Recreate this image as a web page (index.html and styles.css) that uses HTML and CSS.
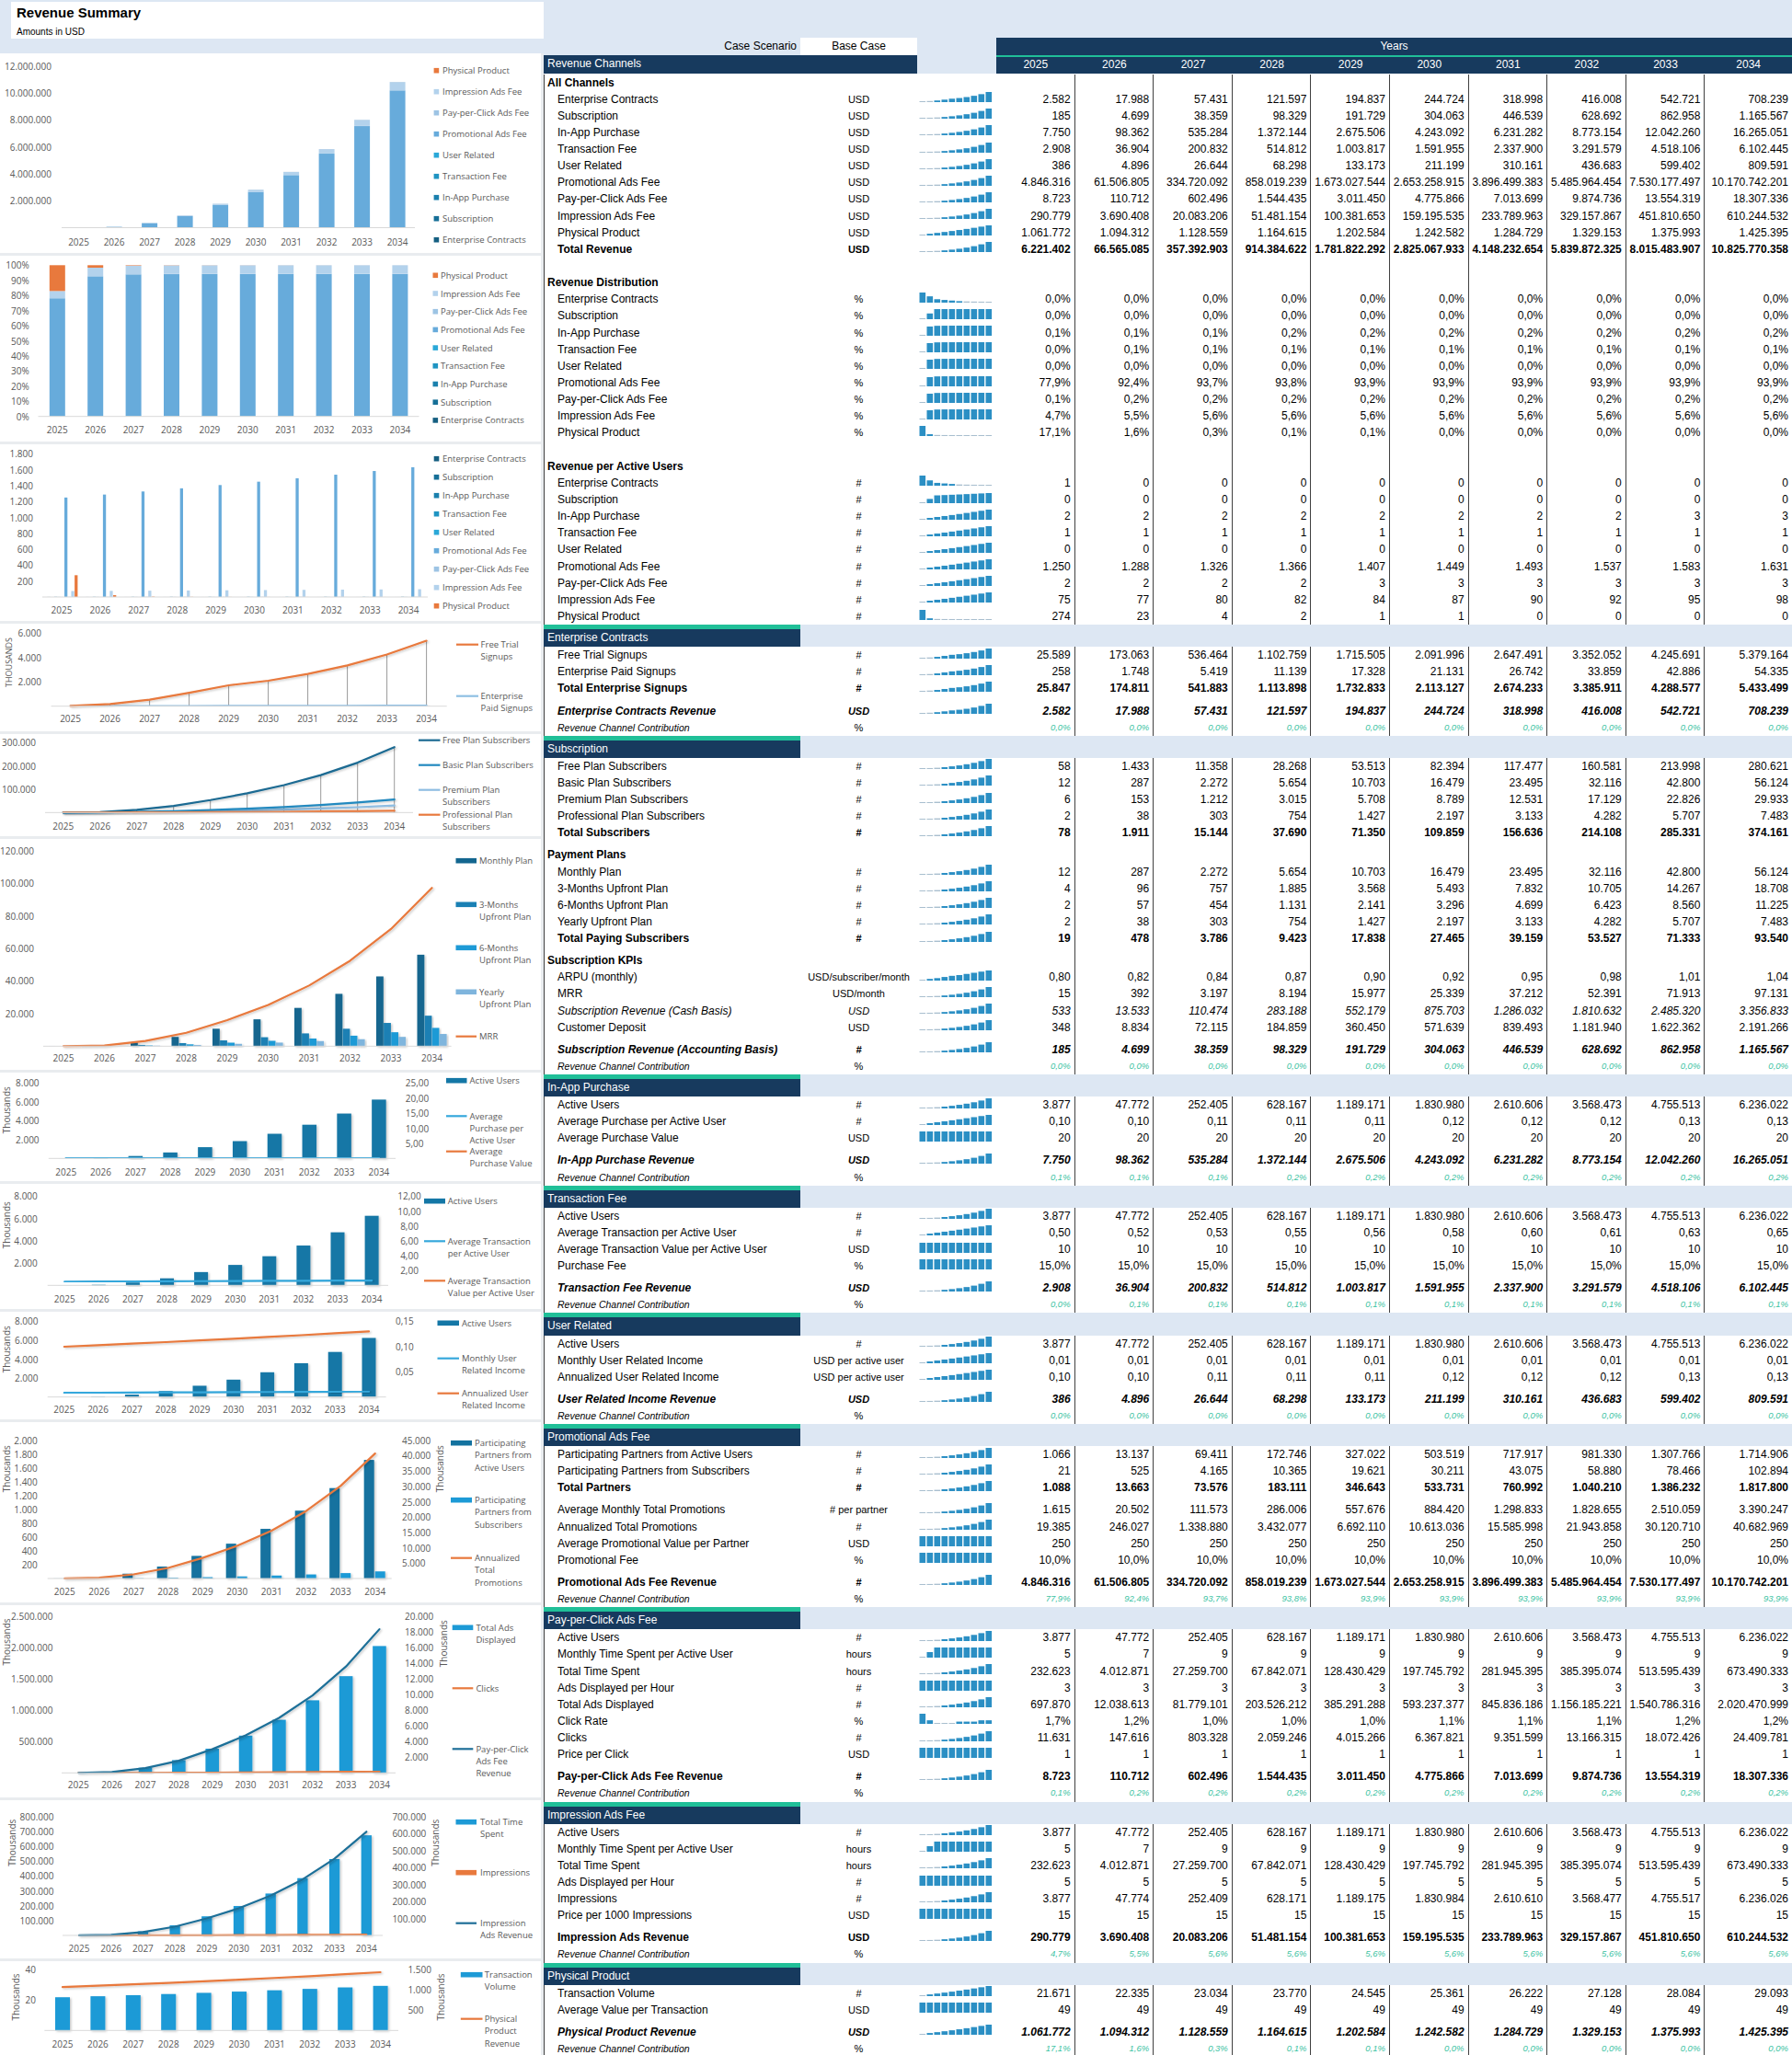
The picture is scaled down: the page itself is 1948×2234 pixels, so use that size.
FILE: index.html
```html
<!DOCTYPE html>
<html lang="en">
<head>
<meta charset="utf-8">
<title>Revenue Summary</title>
<link rel="stylesheet" href="styles.css">
</head>
<body>
<div class="page">
  <aside class="left">
    <div class="titlebar">
      <div class="titlebox">
        <div class="title">Revenue Summary</div>
        <div class="subtitle">Amounts in USD</div>
      </div>
    </div>
    <div class="charts" id="charts"></div>
  </aside>
  <main class="right">
    <div class="hdr-top"></div>
    <div class="grid hdr1">
      <div class="case">Case Scenario</div>
      <div class="base">Base Case</div>
      <div class="lb"></div>
      <div class="yrs-title">Years</div>
    </div>
    <div class="grid hdr2">
      <div class="rc">Revenue Channels</div>
      <div class="lb"></div>
      <div class="yr">2025</div>
      <div class="yr">2026</div>
      <div class="yr">2027</div>
      <div class="yr">2028</div>
      <div class="yr">2029</div>
      <div class="yr">2030</div>
      <div class="yr">2031</div>
      <div class="yr">2032</div>
      <div class="yr">2033</div>
      <div class="yr">2034</div>
    </div>
    <div class="rows" id="rows"></div>
  </main>
</div>
<script src="script.js"></script>
</body>
</html>
```

FILE: styles.css
```css
* { box-sizing: border-box; margin: 0; padding: 0; }
html, body { width: 1948px; height: 2234px; overflow: hidden; background: #fff; }
body { font-family: "Liberation Sans", Arial, sans-serif; font-size: 12px; color: #000; }

.page { display: flex; width: 1948px; height: 2234px; }

.left { width: 591px; flex: none; display: flex; flex-direction: column; }
.titlebar { height: 58px; background: #dde7f3; padding: 2px 0 0 12px; flex: none; }
.titlebox { height: 40px; background: #fff; padding: 3px 0 0 6px; }
.title { font-size: 15px; font-weight: bold; line-height: 18px; }
.subtitle { font-size: 10px; line-height: 12px; margin-top: 6px; }

.charts { flex: 1; display: flex; flex-direction: column; gap: 3px; background: #e9ecef; padding-right: 3px; }
.card { background: #fff; flex: none; }
.card svg { display: block; }

.ax, .lg, .rt9 { font-family: "Open Sans", "Liberation Sans", sans-serif; fill: #595959; }
.ax { font-size: 10px; }
.lg { font-size: 9.5px; }
.rt9 { font-size: 9px; }

.right { flex: 1; min-width: 0; }
.hdr-top { height: 41px; background: #dde7f3; }

.grid, .row { display: grid; grid-template-columns: 279px 127px 86px repeat(9, 85.6px) 1fr; }

.hdr1 { height: 19px; line-height: 19px; }
.case { background: #dde7f3; text-align: right; padding-right: 4px; }
.base { background: #fff; text-align: center; }
.lb { background: #dde7f3; }
.yrs-title { grid-column: 4 / -1; background: #173a5e; color: #fff; text-align: center; }

.hdr2 { height: 19.5px; }
.rc { grid-column: 1 / 3; background: #173a5e; color: #fff; padding-left: 4px; line-height: 19.5px; }
.yr { background: #173a5e; color: #fff; text-align: center; border-top: 2.7px solid #20bf98; line-height: 16.8px; }

.rows { padding-top: 1px; }
.row { height: 18.15px; line-height: 18.15px; box-shadow: inset 1px 0 0 #404040; }
.row > div { white-space: nowrap; }
.v { border-right: 1px solid #404040; }
.n { text-align: right; padding-right: 4px; }
.lab { padding-left: 15px; }
.grp .lab { padding-left: 4px; font-weight: bold; }
.u { text-align: center; font-size: 11px; }
.s { padding-left: 2px; }
.s svg { display: block; margin-top: 1.5px; }
.sp { height: 5.9px; }

.total .lab, .total .u, .total .n,
.rev .lab, .rev .u, .rev .n { font-weight: bold; }
.it .lab, .it .u, .it .n { font-style: italic; }

.contrib .lab { font-style: italic; font-size: 10.5px; }
.contrib .n { font-style: italic; font-size: 9.5px; color: #3cc3a3; }

.sec { height: 24.05px; background: #dde7f3; display: grid; grid-template-columns: 279px 1fr; }
.sec .lab { background: #173a5e; border-top: 5.9px solid #20bf98; color: #fff; padding-left: 4px; line-height: 18.15px; }
```

FILE: script.js
```js
(function () {
  'use strict';
  function f(n) { return String(Math.round(n)).replace(/\B(?=(\d{3})+(?!\d))/g, '.'); }
  function S(s) { return s.split(' '); }
  function rep(s) { var a = []; for (var i = 0; i < 10; i++) a.push(s); return a; }
  function parse(s) { return parseFloat(s.replace('%', '').replace(/\./g, '').replace(',', '.')); }
  function map10(fn) { var a = []; for (var i = 0; i < 10; i++) a.push(fn(i)); return a; }

  var KEYS = ['EC', 'Sub', 'IAP', 'TF', 'UR', 'Promo', 'PPC', 'Imp', 'Phys'];
  var NAME = { EC: 'Enterprise Contracts', Sub: 'Subscription', IAP: 'In-App Purchase', TF: 'Transaction Fee', UR: 'User Related', Promo: 'Promotional Ads Fee', PPC: 'Pay-per-Click Ads Fee', Imp: 'Impression Ads Fee', Phys: 'Physical Product' };
  var C = {
    EC: [2582, 17988, 57431, 121597, 194837, 244724, 318998, 416008, 542721, 708239],
    Sub: [185, 4699, 38359, 98329, 191729, 304063, 446539, 628692, 862958, 1165567],
    IAP: [7750, 98362, 535284, 1372144, 2675506, 4243092, 6231282, 8773154, 12042260, 16265051],
    TF: [2908, 36904, 200832, 514812, 1003817, 1591955, 2337900, 3291579, 4518106, 6102445],
    UR: [386, 4896, 26644, 68298, 133173, 211199, 310161, 436683, 599402, 809591],
    Promo: [4846316, 61506805, 334720092, 858019239, 1673027544, 2653258915, 3896499383, 5485964454, 7530177497, 10170742201],
    PPC: [8723, 110712, 602496, 1544435, 3011450, 4775866, 7013699, 9874736, 13554319, 18307336],
    Imp: [290779, 3690408, 20083206, 51481154, 100381653, 159195535, 233789963, 329157867, 451810650, 610244532],
    Phys: [1061772, 1094312, 1128559, 1164615, 1202584, 1242582, 1284729, 1329153, 1375993, 1425395]
  };
  var TOT = [6221402, 66565085, 357392903, 914384622, 1781822292, 2825067933, 4148232654, 5839872325, 8015483907, 10825770358];
  var AU = [3877, 47772, 252405, 628167, 1189171, 1830980, 2610606, 3568473, 4755513, 6236022];
  var FT = [25589, 173063, 536464, 1102759, 1715505, 2091996, 2647491, 3352052, 4245691, 5379164];
  var EPS = [258, 1748, 5419, 11139, 17328, 21131, 26742, 33859, 42886, 54335];
  var FP = [58, 1433, 11358, 28268, 53513, 82394, 117477, 160581, 213998, 280621];
  var BP = [12, 287, 2272, 5654, 10703, 16479, 23495, 32116, 42800, 56124];
  var PP = [6, 153, 1212, 3015, 5708, 8789, 12531, 17129, 22826, 29933];
  var PRO = [2, 38, 303, 754, 1427, 2197, 3133, 4282, 5707, 7483];
  var Q3 = [4, 96, 757, 1885, 3568, 5493, 7832, 10705, 14267, 18708];
  var H6 = [2, 57, 454, 1131, 2141, 3296, 4699, 6423, 8560, 11225];
  var MRR = [15, 392, 3197, 8194, 15977, 25339, 37212, 52391, 71913, 97131];
  var PAU = [1066, 13137, 69411, 172746, 327022, 503519, 717917, 981330, 1307766, 1714906];
  var PS = [21, 525, 4165, 10365, 19621, 30211, 43075, 58880, 78466, 102894];
  var ATP = [19385, 246027, 1338880, 3432077, 6692110, 10613036, 15585998, 21943858, 30120710, 40682969];
  var TTS = [232623, 4012871, 27259700, 67842071, 128430429, 197745792, 281945395, 385395074, 513595439, 673490333];
  var TAD = [697870, 12038613, 81779101, 203526212, 385291288, 593237377, 845836186, 1156185221, 1540786316, 2020470999];
  var CLK = [11631, 147616, 803328, 2059246, 4015266, 6367821, 9351599, 13166315, 18072426, 24409781];
  var IMPS = [3877, 47774, 252409, 628171, 1189175, 1830984, 2610610, 3568477, 4755517, 6236026];
  var TV = [21671, 22335, 23034, 23770, 24545, 25361, 26222, 27128, 28084, 29093];

  var APU = map10(function (i) { return C.IAP[i] / AU[i] / 20; });
  var ATU = map10(function (i) { return C.TF[i] / AU[i] / 1.5; });
  var URA = map10(function (i) { return C.UR[i] / AU[i]; });
  var URM = map10(function (i) { return C.UR[i] / AU[i] / 12; });

  var Z = '0,0% 0,0% 0,0% 0,0% 0,0% 0,0% 0,0% 0,0% 0,0% 0,0%';
  var RD = {
    EC: Z, Sub: Z,
    IAP: '0,1% 0,1% 0,1% 0,2% 0,2% 0,2% 0,2% 0,2% 0,2% 0,2%',
    TF: '0,0% 0,1% 0,1% 0,1% 0,1% 0,1% 0,1% 0,1% 0,1% 0,1%',
    UR: Z,
    Promo: '77,9% 92,4% 93,7% 93,8% 93,9% 93,9% 93,9% 93,9% 93,9% 93,9%',
    PPC: '0,1% 0,2% 0,2% 0,2% 0,2% 0,2% 0,2% 0,2% 0,2% 0,2%',
    Imp: '4,7% 5,5% 5,6% 5,6% 5,6% 5,6% 5,6% 5,6% 5,6% 5,6%',
    Phys: '17,1% 1,6% 0,3% 0,1% 0,1% 0,0% 0,0% 0,0% 0,0% 0,0%'
  };
  var RPA = {
    EC: '1 0 0 0 0 0 0 0 0 0', Sub: '0 0 0 0 0 0 0 0 0 0', IAP: '2 2 2 2 2 2 2 2 3 3',
    TF: '1 1 1 1 1 1 1 1 1 1', UR: '0 0 0 0 0 0 0 0 0 0',
    Promo: '1.250 1.288 1.326 1.366 1.407 1.449 1.493 1.537 1.583 1.631',
    PPC: '2 2 2 2 3 3 3 3 3 3', Imp: '75 77 80 82 84 87 90 92 95 98', Phys: '274 23 4 2 1 1 0 0 0 0'
  };

  /* ---------------- table rows ---------------- */
  var R = [];
  function add(o) { R.push(o); }
  var AUs = AU.map(f);
  var MTS = '5 7 9 9 9 9 9 9 9 9';

  add({ t: 'grp', l: 'All Channels' });
  KEYS.forEach(function (k) { add({ t: 'item', l: NAME[k], u: 'USD', v: C[k].map(f) }); });
  add({ t: 'item total', l: 'Total Revenue', u: 'USD', v: TOT.map(f) });
  add({ t: 'blank' });
  add({ t: 'grp', l: 'Revenue Distribution' });
  KEYS.forEach(function (k) { add({ t: 'item', l: NAME[k], u: '%', v: S(RD[k]), s: C[k].map(function (x, i) { return x / TOT[i]; }) }); });
  add({ t: 'blank' });
  add({ t: 'grp', l: 'Revenue per Active Users' });
  KEYS.forEach(function (k) { add({ t: 'item', l: NAME[k], u: '#', v: S(RPA[k]), s: C[k].map(function (x, i) { return x / AU[i]; }) }); });

  add({ t: 'sec', l: 'Enterprise Contracts' });
  add({ t: 'item', l: 'Free Trial Signups', u: '#', v: FT.map(f) });
  add({ t: 'item', l: 'Enterprise Paid Signups', u: '#', v: EPS.map(f) });
  add({ t: 'item total', l: 'Total Enterprise Signups', u: '#', v: map10(function (i) { return f(FT[i] + EPS[i]); }) });
  add({ t: 'sp' });
  add({ t: 'item rev it', l: 'Enterprise Contracts Revenue', u: 'USD', v: C.EC.map(f) });
  add({ t: 'contrib', v: S(RD.EC) });

  add({ t: 'sec', l: 'Subscription' });
  add({ t: 'item', l: 'Free Plan Subscribers', u: '#', v: FP.map(f) });
  add({ t: 'item', l: 'Basic Plan Subscribers', u: '#', v: BP.map(f) });
  add({ t: 'item', l: 'Premium Plan Subscribers', u: '#', v: PP.map(f) });
  add({ t: 'item', l: 'Professional Plan Subscribers', u: '#', v: PRO.map(f) });
  add({ t: 'item total', l: 'Total Subscribers', u: '#', v: S('78 1.911 15.144 37.690 71.350 109.859 156.636 214.108 285.331 374.161') });
  add({ t: 'sp' });
  add({ t: 'grp', l: 'Payment Plans' });
  add({ t: 'item', l: 'Monthly Plan', u: '#', v: BP.map(f) });
  add({ t: 'item', l: '3-Months Upfront Plan', u: '#', v: Q3.map(f) });
  add({ t: 'item', l: '6-Months Upfront Plan', u: '#', v: H6.map(f) });
  add({ t: 'item', l: 'Yearly Upfront Plan', u: '#', v: PRO.map(f) });
  add({ t: 'item total', l: 'Total Paying Subscribers', u: '#', v: S('19 478 3.786 9.423 17.838 27.465 39.159 53.527 71.333 93.540') });
  add({ t: 'sp' });
  add({ t: 'grp', l: 'Subscription KPIs' });
  add({ t: 'item', l: 'ARPU (monthly)', u: 'USD/subscriber/month', v: S('0,80 0,82 0,84 0,87 0,90 0,92 0,95 0,98 1,01 1,04') });
  add({ t: 'item', l: 'MRR', u: 'USD/month', v: MRR.map(f) });
  add({ t: 'item it', l: 'Subscription Revenue (Cash Basis)', u: 'USD', v: S('533 13.533 110.474 283.188 552.179 875.703 1.286.032 1.810.632 2.485.320 3.356.833') });
  add({ t: 'item', l: 'Customer Deposit', u: 'USD', v: S('348 8.834 72.115 184.859 360.450 571.639 839.493 1.181.940 1.622.362 2.191.266') });
  add({ t: 'sp' });
  add({ t: 'item rev it', l: 'Subscription Revenue (Accounting Basis)', u: '#', v: C.Sub.map(f) });
  add({ t: 'contrib', v: S(RD.Sub) });

  add({ t: 'sec', l: 'In-App Purchase' });
  add({ t: 'item', l: 'Active Users', u: '#', v: AUs });
  add({ t: 'item', l: 'Average Purchase per Active User', u: '#', v: S('0,10 0,10 0,11 0,11 0,11 0,12 0,12 0,12 0,13 0,13'), s: APU });
  add({ t: 'item', l: 'Average Purchase Value', u: 'USD', v: rep('20') });
  add({ t: 'sp' });
  add({ t: 'item rev it', l: 'In-App Purchase Revenue', u: 'USD', v: C.IAP.map(f) });
  add({ t: 'contrib', v: S(RD.IAP) });

  add({ t: 'sec', l: 'Transaction Fee' });
  add({ t: 'item', l: 'Active Users', u: '#', v: AUs });
  add({ t: 'item', l: 'Average Transaction per Active User', u: '#', v: S('0,50 0,52 0,53 0,55 0,56 0,58 0,60 0,61 0,63 0,65'), s: ATU });
  add({ t: 'item', l: 'Average Transaction Value per Active User', u: 'USD', v: rep('10') });
  add({ t: 'item', l: 'Purchase Fee', u: '%', v: rep('15,0%') });
  add({ t: 'sp' });
  add({ t: 'item rev it', l: 'Transaction Fee Revenue', u: 'USD', v: C.TF.map(f) });
  add({ t: 'contrib', v: S(RD.TF) });

  add({ t: 'sec', l: 'User Related' });
  add({ t: 'item', l: 'Active Users', u: '#', v: AUs });
  add({ t: 'item', l: 'Monthly User Related Income', u: 'USD per active user', v: rep('0,01'), s: URM });
  add({ t: 'item', l: 'Annualized User Related Income', u: 'USD per active user', v: S('0,10 0,10 0,11 0,11 0,11 0,12 0,12 0,12 0,13 0,13'), s: URA });
  add({ t: 'sp' });
  add({ t: 'item rev it', l: 'User Related Income Revenue', u: 'USD', v: C.UR.map(f) });
  add({ t: 'contrib', v: S(RD.UR) });

  add({ t: 'sec', l: 'Promotional Ads Fee' });
  add({ t: 'item', l: 'Participating Partners from Active Users', u: '#', v: PAU.map(f) });
  add({ t: 'item', l: 'Participating Partners from Subscribers', u: '#', v: PS.map(f) });
  add({ t: 'item total', l: 'Total Partners', u: '#', v: S('1.088 13.663 73.576 183.111 346.643 533.731 760.992 1.040.210 1.386.232 1.817.800') });
  add({ t: 'sp' });
  add({ t: 'item', l: 'Average Monthly Total Promotions', u: '# per partner', v: S('1.615 20.502 111.573 286.006 557.676 884.420 1.298.833 1.828.655 2.510.059 3.390.247') });
  add({ t: 'item', l: 'Annualized Total Promotions', u: '#', v: ATP.map(f) });
  add({ t: 'item', l: 'Average Promotional Value per Partner', u: 'USD', v: rep('250') });
  add({ t: 'item', l: 'Promotional Fee', u: '%', v: rep('10,0%') });
  add({ t: 'sp' });
  add({ t: 'item rev', l: 'Promotional Ads Fee Revenue', u: '#', v: C.Promo.map(f) });
  add({ t: 'contrib', v: S(RD.Promo) });

  add({ t: 'sec', l: 'Pay-per-Click Ads Fee' });
  add({ t: 'item', l: 'Active Users', u: '#', v: AUs });
  add({ t: 'item', l: 'Monthly Time Spent per Active User', u: 'hours', v: S(MTS) });
  add({ t: 'item', l: 'Total Time Spent', u: 'hours', v: TTS.map(f) });
  add({ t: 'item', l: 'Ads Displayed per Hour', u: '#', v: rep('3') });
  add({ t: 'item', l: 'Total Ads Displayed', u: '#', v: TAD.map(f) });
  add({ t: 'item', l: 'Click Rate', u: '%', v: S('1,7% 1,2% 1,0% 1,0% 1,0% 1,1% 1,1% 1,1% 1,2% 1,2%') });
  add({ t: 'item', l: 'Clicks', u: '#', v: CLK.map(f) });
  add({ t: 'item', l: 'Price per Click', u: 'USD', v: rep('1') });
  add({ t: 'sp' });
  add({ t: 'item rev', l: 'Pay-per-Click Ads Fee Revenue', u: '#', v: C.PPC.map(f) });
  add({ t: 'contrib', v: S(RD.PPC) });

  add({ t: 'sec', l: 'Impression Ads Fee' });
  add({ t: 'item', l: 'Active Users', u: '#', v: AUs });
  add({ t: 'item', l: 'Monthly Time Spent per Active User', u: 'hours', v: S(MTS) });
  add({ t: 'item', l: 'Total Time Spent', u: 'hours', v: TTS.map(f) });
  add({ t: 'item', l: 'Ads Displayed per Hour', u: '#', v: rep('5') });
  add({ t: 'item', l: 'Impressions', u: '#', v: IMPS.map(f) });
  add({ t: 'item', l: 'Price per 1000 Impressions', u: 'USD', v: rep('15') });
  add({ t: 'sp' });
  add({ t: 'item rev', l: 'Impression Ads Revenue', u: 'USD', v: C.Imp.map(f) });
  add({ t: 'contrib', v: S(RD.Imp) });

  add({ t: 'sec', l: 'Physical Product' });
  add({ t: 'item', l: 'Transaction Volume', u: '#', v: TV.map(f) });
  add({ t: 'item', l: 'Average Value per Transaction', u: 'USD', v: rep('49') });
  add({ t: 'sp' });
  add({ t: 'item rev it', l: 'Physical Product Revenue', u: 'USD', v: C.Phys.map(f) });
  add({ t: 'contrib', v: S(RD.Phys) });

  function spark(vals) {
    var mn = Math.min.apply(null, vals), mx = Math.max.apply(null, vals);
    var s = '<svg width="80" height="11" viewBox="0 0 80 11">';
    for (var i = 0; i < 10; i++) {
      var h = (mx - mn) < 1e-12 ? 11 : 1 + (vals[i] - mn) / (mx - mn) * 10;
      var c = h < 1.6 ? '#a9bfcf' : '#2b8fc4';
      s += '<rect x="' + (i * 8 + 0.5) + '" y="' + (11 - h).toFixed(2) + '" width="6.6" height="' + h.toFixed(2) + '" fill="' + c + '"/>';
    }
    return s + '</svg>';
  }
  function yc(v) {
    var s = '';
    for (var i = 0; i < 10; i++) s += '<div class="n' + (i < 9 ? ' v' : '') + '">' + (v ? v[i] : '') + '</div>';
    return s;
  }
  var html = '';
  R.forEach(function (r) {
    if (r.t === 'sec') html += '<div class="sec"><div class="lab">' + r.l + '</div></div>';
    else if (r.t === 'sp') html += '<div class="row sp"><div></div><div></div><div></div>' + yc(null) + '</div>';
    else if (r.t === 'blank') html += '<div class="row"><div></div><div></div><div></div>' + yc(null) + '</div>';
    else if (r.t === 'grp') html += '<div class="row grp"><div class="lab">' + r.l + '</div><div></div><div></div>' + yc(null) + '</div>';
    else if (r.t === 'contrib') html += '<div class="row contrib"><div class="lab">Revenue Channel Contribution</div><div class="u">%</div><div></div>' + yc(r.v) + '</div>';
    else {
      var sv = r.s || r.v.map(parse);
      html += '<div class="row ' + r.t + '"><div class="lab">' + r.l + '</div><div class="u">' + r.u + '</div><div class="s">' + spark(sv) + '</div>' + yc(r.v) + '</div>';
    }
  });
  document.getElementById('rows').innerHTML = html;

  /* ---------------- charts ---------------- */
  var OR = '#e8793d', DB = '#1477a6', BB = '#1d9ad6', LB = '#36a8dc', NV = '#1f6f98';
  var COL = { EC: '#155f81', Sub: '#166f97', IAP: '#1a80ad', TF: '#1f94c2', UR: '#2aa8d8', Promo: '#67abdb', PPC: '#9dc4e4', Imp: '#b3d2ec', Phys: '#e8793d' };

  function T(x, y, s, cls, anc) { return '<text x="' + x + '" y="' + y + '" class="' + cls + '" text-anchor="' + (anc || 'start') + '" dominant-baseline="central">' + s + '</text>'; }
  function RT(x, y, s, cls) { return '<text class="' + cls + '" transform="translate(' + x + ' ' + y + ') rotate(-90)" text-anchor="middle" dominant-baseline="central">' + s + '</text>'; }
  function rect(x, y, w, h, c, fid) {
    if (h < 0) { y += h; h = -h; }
    return '<rect x="' + x.toFixed(2) + '" y="' + y.toFixed(2) + '" width="' + w + '" height="' + h.toFixed(2) + '" fill="' + c + '"' + (fid ? ' filter="url(#' + fid + ')"' : '') + '/>';
  }
  function poly(pts, c, w, fid) {
    return '<polyline points="' + pts.map(function (p) { return p[0].toFixed(2) + ',' + p[1].toFixed(2); }).join(' ') + '" fill="none" stroke="' + c + '" stroke-width="' + w + '" stroke-linejoin="round" stroke-linecap="round"' + (fid ? ' filter="url(#' + fid + ')"' : '') + '/>';
  }
  function X(c, i) { return c.yx + i * c.yp; }
  function bars(c, arr, sc, w, off, col, fid) {
    var s = '';
    for (var i = 0; i < 10; i++) { var h = arr[i] * sc; s += rect(X(c, i) + off, c.by - h, w, h, col, fid); }
    return s;
  }
  function pts(c, arr, sc) { var p = []; for (var i = 0; i < 10; i++) p.push([X(c, i), c.by - arr[i] * sc]); return p; }
  function line(c, arr, sc, col, fid) { return poly(pts(c, arr, sc), col, 2.2, fid); }
  function drops(c, arr, sc) {
    var s = '';
    pts(c, arr, sc).forEach(function (p) { s += '<line x1="' + p[0].toFixed(2) + '" x2="' + p[0].toFixed(2) + '" y1="' + p[1].toFixed(2) + '" y2="' + c.by + '" stroke="#7f7f7f" stroke-width="0.8"/>'; });
    return s;
  }
  function L(k, c, y, texts) {
    return { k: k, c: c, y: y, t: texts.map(function (s, j) { return [s, y + j * 13.2]; }) };
  }
  function ticks(from, to, step, fn) { var a = []; for (var v = from; v <= to + 1e-9; v += step) a.push([fn ? fn(v) : f(v), v]); return a; }

  function frame(c) {
    var s = '<line x1="' + c.bx[0] + '" x2="' + c.bx[1] + '" y1="' + c.by + '" y2="' + c.by + '" stroke="#d9d9d9" stroke-width="1"/>';
    for (var i = 0; i < 10; i++) s += T(X(c, i).toFixed(2), c.yy, 2025 + i, 'ax', 'middle');
    (c.yl || []).forEach(function (a) { s += T(c.ylx, a[1].toFixed(2), a[0], 'ax', 'end'); });
    (c.yr || []).forEach(function (a) { s += T(c.yrx, a[1].toFixed(2), a[0], 'ax', c.yra || 'start'); });
    (c.rot || []).forEach(function (a) { s += RT(a[1], a[2], a[0], a[3] || 'ax'); });
    (c.lg || []).forEach(function (g) {
      if (g.k === 'sq') s += rect(c.lx, g.y - 2.8, 5.6, 5.6, g.c);
      else if (g.k === 'rect') s += rect(c.lx, g.y - 2.8, c.lw, 5.6, g.c);
      else s += '<line x1="' + c.lx + '" x2="' + (c.lx + c.lw) + '" y1="' + g.y + '" y2="' + g.y + '" stroke="' + g.c + '" stroke-width="2.2"/>';
      g.t.forEach(function (t) { s += T(c.ltx, t[1].toFixed(2), t[0], 'lg'); });
    });
    return s;
  }

  var STACKTOP = ['Phys', 'Imp', 'PPC', 'Promo', 'UR', 'TF', 'IAP', 'Sub', 'EC'];
  var charts = [];

  // 1 - revenue stacked (thousands)
  charts.push({ top: 58, h: 217, bx: [67, 451], by: 247.5, yx: 85.6, yp: 38.5, yy: 263, ylx: 56,
    yl: [1, 2, 3, 4, 5, 6].map(function (k) { return [f(k * 2000000), 247.5 - k * 29.26]; }),
    lx: 471.6, ltx: 481,
    lg: STACKTOP.map(function (k, j) { return L('sq', COL[k], 76.7 + j * 23, [NAME[k]]); }),
    body: function (c, fid) {
      var s = '';
      for (var i = 0; i < 10; i++) {
        var y = c.by;
        KEYS.forEach(function (k) { var h = C[k][i] / 1000 / 2e6 * 29.26; s += rect(X(c, i) - 8.5, y - h, 17, h, COL[k]); y -= h; });
      }
      return s;
    } });

  // 2 - distribution 100%
  charts.push({ top: 278, h: 202, bx: [41.5, 455.5], by: 452.7, yx: 62.3, yp: 41.4, yy: 466.7, ylx: 31.7,
    yl: map10(function (k) { return [(100 - k * 10) + '%', 288.3 + k * 16.44]; }).concat([['0%', 452.7]]),
    lx: 470.5, ltx: 479,
    lg: STACKTOP.map(function (k, j) { return L('sq', COL[k], 299.3 + j * 19.7, [NAME[k]]); }),
    body: function (c, fid) {
      var s = '';
      for (var i = 0; i < 10; i++) {
        var y = c.by;
        KEYS.forEach(function (k) { var h = C[k][i] / TOT[i] * 164.4; s += rect(X(c, i) - 8.5, y - h, 17, h, COL[k]); y -= h; });
      }
      return s;
    } });

  // 3 - revenue per active user
  charts.push({ top: 483, h: 192, bx: [46, 465], by: 649, yx: 67, yp: 41.9, yy: 662.7, ylx: 36,
    yl: ticks(200, 1800, 200).map(function (a) { return [a[0], 649 - a[1] * 0.0865]; }),
    lx: 471.7, ltx: 481,
    lg: KEYS.map(function (k, j) { return L('sq', COL[k], 498.7 + j * 20, [NAME[k]]); }),
    body: function (c, fid) {
      var s = '';
      for (var i = 0; i < 10; i++) {
        KEYS.forEach(function (k, j) { var h = C[k][i] / AU[i] * 0.0865; s += rect(X(c, i) - 15.5 + j * 3.7, c.by - h, 3.3, h, COL[k]); });
      }
      return s;
    } });

  // 4 - enterprise signups
  charts.push({ top: 678, h: 117, bx: [55.5, 485.7], by: 767.7, yx: 76.6, yp: 43, yy: 781.3, ylx: 45,
    yl: [['2.000', 741.2], ['4.000', 714.8], ['6.000', 688.3]],
    rot: [['THOUSANDS', 9.4, 720, 'rt9']],
    lx: 496, lw: 24, ltx: 522.6,
    lg: [L('line', OR, 700.7, ['Free Trial', 'Signups']), L('line', '#8fbfe3', 756.7, ['Enterprise', 'Paid Signups'])],
    body: function (c, fid) {
      var sc = 26.47 / 2000 / 1000;
      return drops(c, FT, sc) + line(c, EPS, sc, '#8fbfe3', fid) + line(c, FT, sc, OR, fid);
    } });

  // 5 - subscribers
  charts.push({ top: 798, h: 111, bx: [49, 449], by: 883.3, yx: 68.7, yp: 40, yy: 897.7, ylx: 39,
    yl: [['100.000', 858], ['200.000', 832.6], ['300.000', 807.3]],
    lx: 455, lw: 23.5, ltx: 481,
    lg: [L('line', '#1b6a92', 804.7, ['Free Plan Subscribers']), L('line', '#2389bf', 831.7, ['Basic Plan Subscribers']),
      L('line', '#8ebde2', 858.7, ['Premium Plan', 'Subscribers']), L('line', OR, 885.7, ['Professional Plan', 'Subscribers'])],
    body: function (c, fid) {
      var sc = 25.33 / 100000;
      return drops(c, FP, sc) + line(c, PP, sc, '#8ebde2', fid) + line(c, BP, sc, '#2389bf', fid) + line(c, FP, sc, '#1b6a92', fid) + line(c, PRO, sc, OR, fid);
    } });

  // 6 - payment plans + MRR
  charts.push({ top: 912, h: 251, bx: [47, 490.6], by: 1137.3, yx: 69, yp: 44.5, yy: 1150.3, ylx: 37,
    yl: ticks(20000, 120000, 20000).map(function (a) { return [a[0], 1137.3 - a[1] / 20000 * 35.43]; }),
    lx: 495.5, lw: 22.5, ltx: 521,
    lg: [L('rect', '#13668f', 935.7, ['Monthly Plan']), L('rect', '#1a80b4', 983.3, ['3-Months', 'Upfront Plan']),
      L('rect', '#1e9ad6', 1030.3, ['6-Months', 'Upfront Plan']), L('rect', '#7fb5dd', 1078.3, ['Yearly', 'Upfront Plan']),
      L('line', OR, 1126.7, ['MRR'])],
    body: function (c, fid) {
      var sc = 35.43 / 20000;
      return bars(c, BP, sc, 7.8, -16, '#13668f', fid) + bars(c, Q3, sc, 7.8, -7.9, '#1a80b4', fid) +
        bars(c, H6, sc, 7.8, 0.2, '#1e9ad6', fid) + bars(c, PRO, sc, 7.8, 8.3, '#7fb5dd', fid) + line(c, MRR, sc, OR, fid);
    } });

  // 7 - in-app purchase
  charts.push({ top: 1166, h: 118, bx: [52.8, 430], by: 1259.3, yx: 71.7, yp: 37.8, yy: 1273.7, ylx: 42.6,
    yl: [['2.000', 1238.8], ['4.000', 1218.3], ['6.000', 1197.8], ['8.000', 1177.3]],
    yrx: 440.8, yr: [['5,00', 1242.9], ['10,00', 1226.5], ['15,00', 1210.1], ['20,00', 1193.7], ['25,00', 1177.3]],
    rot: [['Thousands', 7, 1206.7]],
    lx: 485, lw: 22.5, ltx: 510.6,
    lg: [L('rect', DB, 1174.7, ['Active Users']), L('line', LB, 1213.3, ['Average', 'Purchase per', 'Active User']), L('line', OR, 1251.7, ['Average', 'Purchase Value'])],
    body: function (c, fid) {
      return bars(c, AU, 20.5 / 2000 / 1000, 15.5, -7.75, DB, fid) + line(c, APU, 3.28, LB, fid) + line(c, rep(20), 3.28, OR, fid);
    } });

  // 8 - transaction fee
  charts.push({ top: 1287, h: 136, bx: [51.7, 422], by: 1397.3, yx: 70.2, yp: 37.1, yy: 1411.7, ylx: 40.8,
    yl: [['2.000', 1373.05], ['4.000', 1348.8], ['6.000', 1324.55], ['8.000', 1300.3]],
    yrx: 445, yra: 'middle', yr: [['2,00', 1381.1], ['4,00', 1365], ['6,00', 1348.8], ['8,00', 1332.6], ['10,00', 1316.5], ['12,00', 1300.3]],
    rot: [['Thousands', 7, 1331.7]],
    lx: 461, lw: 23, ltx: 486.8,
    lg: [L('rect', DB, 1305.7, ['Active Users']), L('line', LB, 1349.3, ['Average Transaction', 'per Active User']), L('line', OR, 1392.3, ['Average Transaction', 'Value per Active User'])],
    body: function (c, fid) {
      return bars(c, AU, 24.25 / 2000 / 1000, 15, -7.5, DB, fid) + line(c, ATU, 8.083, LB, fid) + line(c, rep(10), 8.083, OR, fid);
    } });

  // 9 - user related
  charts.push({ top: 1426, h: 117, bx: [51.7, 419.6], by: 1518.7, yx: 69.8, yp: 36.8, yy: 1532.3, ylx: 41.5,
    yl: [['2.000', 1498.1], ['4.000', 1477.5], ['6.000', 1456.9], ['8.000', 1436.3]],
    yrx: 430, yr: [['0,05', 1491.2], ['0,10', 1463.8], ['0,15', 1436.3]],
    rot: [['Thousands', 7, 1466.7]],
    lx: 475.5, lw: 23.5, ltx: 502,
    lg: [L('rect', DB, 1438.3, ['Active Users']), L('line', LB, 1476.7, ['Monthly User', 'Related Income']), L('line', OR, 1514.7, ['Annualized User', 'Related Income'])],
    body: function (c, fid) {
      return bars(c, AU, 20.6 / 2000 / 1000, 15, -7.5, DB, fid) + line(c, URM, 549.3, LB, fid) + line(c, URA, 549.3, OR, fid);
    } });

  // 10 - promotional
  charts.push({ top: 1546, h: 196, bx: [51.7, 425.7], by: 1716, yx: 70.2, yp: 37.5, yy: 1730.3, ylx: 40.8,
    yl: ticks(200, 2000, 200).map(function (a) { return [a[0], 1716 - a[1] * 0.07515]; }),
    yrx: 437, yr: ticks(5000, 45000, 5000).map(function (a) { return [a[0], 1716 - a[1] * 16.7 / 5000]; }),
    rot: [['Thousands', 7, 1596.7], ['Thousands', 477.7, 1596.7]],
    lx: 490, lw: 23, ltx: 516,
    lg: [L('rect', '#13729f', 1568.7, ['Participating', 'Partners from', 'Active Users']), L('rect', BB, 1630.7, ['Participating', 'Partners from', 'Subscribers']), L('line', OR, 1693.7, ['Annualized', 'Total', 'Promotions'])],
    body: function (c, fid) {
      return bars(c, PAU, 0.07515 / 1000, 11, -12, '#13729f', fid) + bars(c, PS, 0.07515 / 1000, 11, 0, BB, fid) + line(c, ATP, 16.7 / 5000 / 1000, OR, fid);
    } });

  // 11 - pay per click
  charts.push({ top: 1745, h: 209, bx: [67, 430], by: 1927.3, yx: 85.3, yp: 36.35, yy: 1940.3, ylx: 57.4,
    yl: ticks(500000, 2500000, 500000).map(function (a) { return [a[0], 1927.3 - a[1] * 34.12 / 500000]; }),
    yrx: 440, yr: ticks(2000, 20000, 2000).map(function (a) { return [a[0], 1927.3 - a[1] * 17.06 / 2000]; }),
    rot: [['Thousands', 7, 1785], ['Thousands', 482, 1786.7]],
    lx: 491.7, lw: 22.6, ltx: 517.4,
    lg: [L('rect', BB, 1769.3, ['Total Ads', 'Displayed']), L('line', OR, 1835.3, ['Clicks']), L('line', NV, 1901.3, ['Pay-per-Click', 'Ads Fee', 'Revenue'])],
    body: function (c, fid) {
      return bars(c, TAD, 34.12 / 500000 / 1000, 14.6, -7.3, BB, fid) + line(c, CLK, 34.12 / 500000 / 1000, OR, fid) + line(c, C.PPC, 17.06 / 2000 / 1000, NV, fid);
    } });

  // 12 - impression
  charts.push({ top: 1957, h: 172, bx: [68, 416], by: 2104, yx: 86, yp: 34.7, yy: 2117.7, ylx: 58.5,
    yl: ticks(100000, 800000, 100000).map(function (a) { return [a[0], 2104 - a[1] * 16.16 / 100000]; }),
    yrx: 426.4, yr: ticks(100000, 700000, 100000).map(function (a) { return [a[0], 2104 - a[1] * 18.47 / 100000]; }),
    rot: [['Thousands', 12.5, 2003.3], ['Thousands', 472.8, 2003.3]],
    lx: 495.5, lw: 22.5, ltx: 522,
    lg: [L('rect', BB, 1980.7, ['Total Time', 'Spent']), L('rect', OR, 2035.7, ['Impressions']), L('line', NV, 2090.7, ['Impression', 'Ads Revenue'])],
    body: function (c, fid) {
      return bars(c, TTS, 16.16 / 100000 / 1000, 11.3, -5.65, BB, fid) + line(c, IMPS, 16.16 / 100000 / 1000, OR, fid) + line(c, C.Imp, 18.47 / 100000 / 1000, NV, fid);
    } });

  // 13 - physical product
  charts.push({ top: 2132, h: 102, bx: [48.3, 433], by: 2207.3, yx: 68, yp: 38.4, yy: 2221.7, ylx: 38.9,
    yl: [['20', 2174], ['40', 2140.7]],
    yrx: 443.4, yr: [['500', 2185.1], ['1.000', 2162.9], ['1.500', 2140.7]],
    rot: [['Thousands', 17, 2171], ['Thousands', 479, 2171]],
    lx: 500.8, lw: 23.7, ltx: 526.8,
    lg: [L('rect', BB, 2146.7, ['Transaction', 'Volume']), L('line', OR, 2194.7, ['Physical', 'Product', 'Revenue'])],
    body: function (c, fid) {
      return bars(c, TV, 33.3 / 20 / 1000, 16, -8, BB, fid) + line(c, C.Phys, 22.2 / 500 / 1000, OR, fid);
    } });

  var out = '';
  charts.forEach(function (c, n) {
    var fid = 'sh' + n;
    var defs = '<defs><filter id="' + fid + '" x="-30%" y="-30%" width="160%" height="160%"><feDropShadow dx="1.5" dy="1.2" stdDeviation="1.2" flood-color="#000" flood-opacity="0.22"/></filter></defs>';
    out += '<div class="card"><svg width="588" height="' + c.h + '" viewBox="0 ' + c.top + ' 588 ' + c.h + '">' + defs + c.body(c, fid) + frame(c) + '</svg></div>';
  });
  document.getElementById('charts').innerHTML = out;
})();
```
